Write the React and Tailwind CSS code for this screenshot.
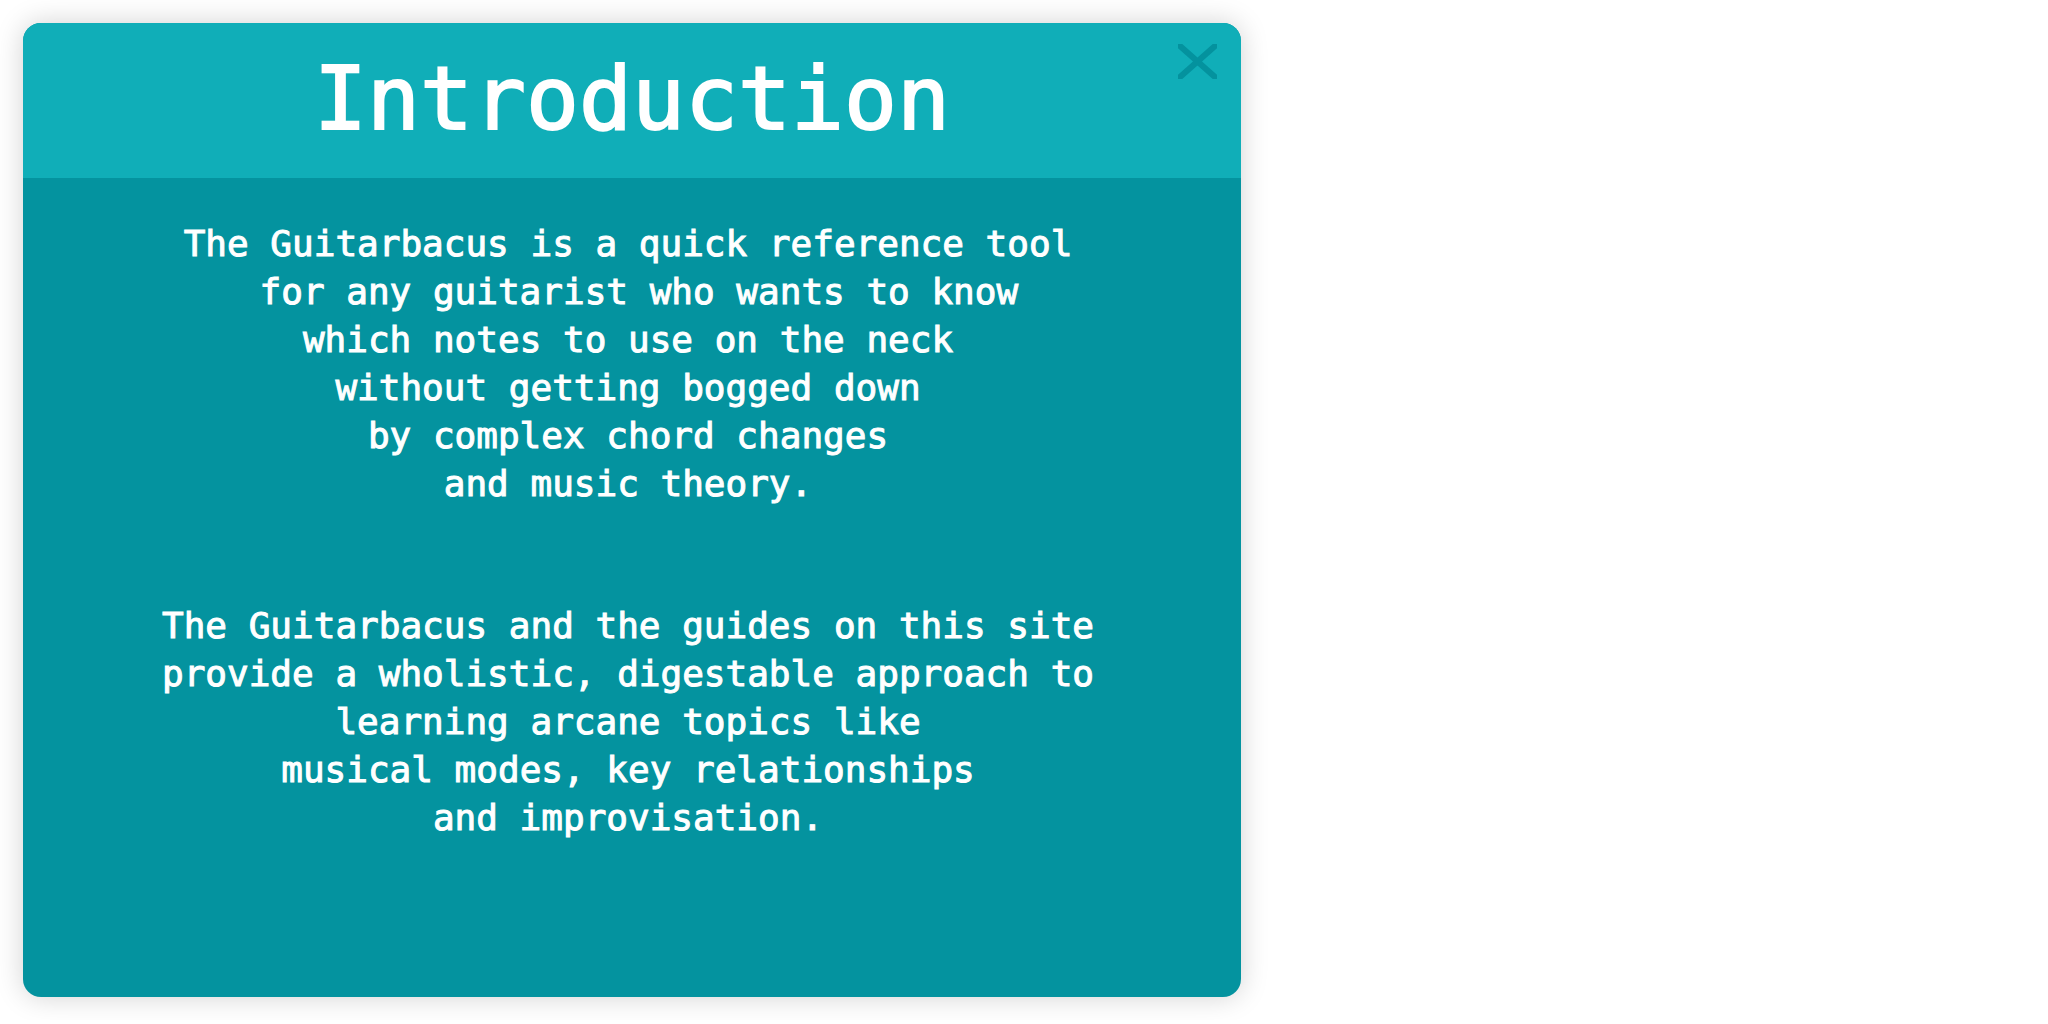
const INTRO = [
  [
    "The Guitarbacus is a quick reference tool",
    "\u00a0for any guitarist who wants to know",
    "which notes to use on the neck",
    "without getting bogged down",
    "by complex chord changes",
    "and music theory.",
  ],
  [
    "The Guitarbacus and the guides on this site",
    "provide a wholistic, digestable approach to",
    "learning arcane topics like",
    "musical modes, key relationships",
    "and improvisation.",
  ],
];

function CloseButton() {
  return (
    <button
      type="button"
      aria-label="Close"
      className="absolute top-[21px] right-6 cursor-pointer text-[#04929e]"
    >
      <svg width="39" height="35" viewBox="0 0 39 35" fill="none" aria-hidden="true">
        <path
          d="M2 2 L37 33 M37 2 L2 33"
          stroke="currentColor"
          strokeWidth="6"
          strokeLinecap="round"
        />
      </svg>
    </button>
  );
}

export default function App() {
  return (
    <main className="bg-white p-[23px] font-['DejaVu_Sans_Mono','Liberation_Mono',monospace] text-white">
      <section className="max-w-[1218px] overflow-hidden rounded-[18px] bg-[#04939f] shadow-[0_0_28px_rgba(0,0,0,0.18)]">
        <header className="relative bg-[#10aeb8] pt-7 pb-[31px] text-center">
          <h1 className="text-[88px] leading-[96px] [-webkit-text-stroke:2px_white]">Introduction</h1>
          <CloseButton />
        </header>
        <div className="flex flex-col gap-[94px] pt-[42px] pr-10 pb-[155px] pl-8 text-center text-[36px] leading-[48px] [-webkit-text-stroke:1px_white]">
          {INTRO.map((lines) => (
            <p key={lines[0]}>
              {lines.map((line) => (
                <span key={line} className="block">
                  {line}
                </span>
              ))}
            </p>
          ))}
        </div>
      </section>
    </main>
  );
}
